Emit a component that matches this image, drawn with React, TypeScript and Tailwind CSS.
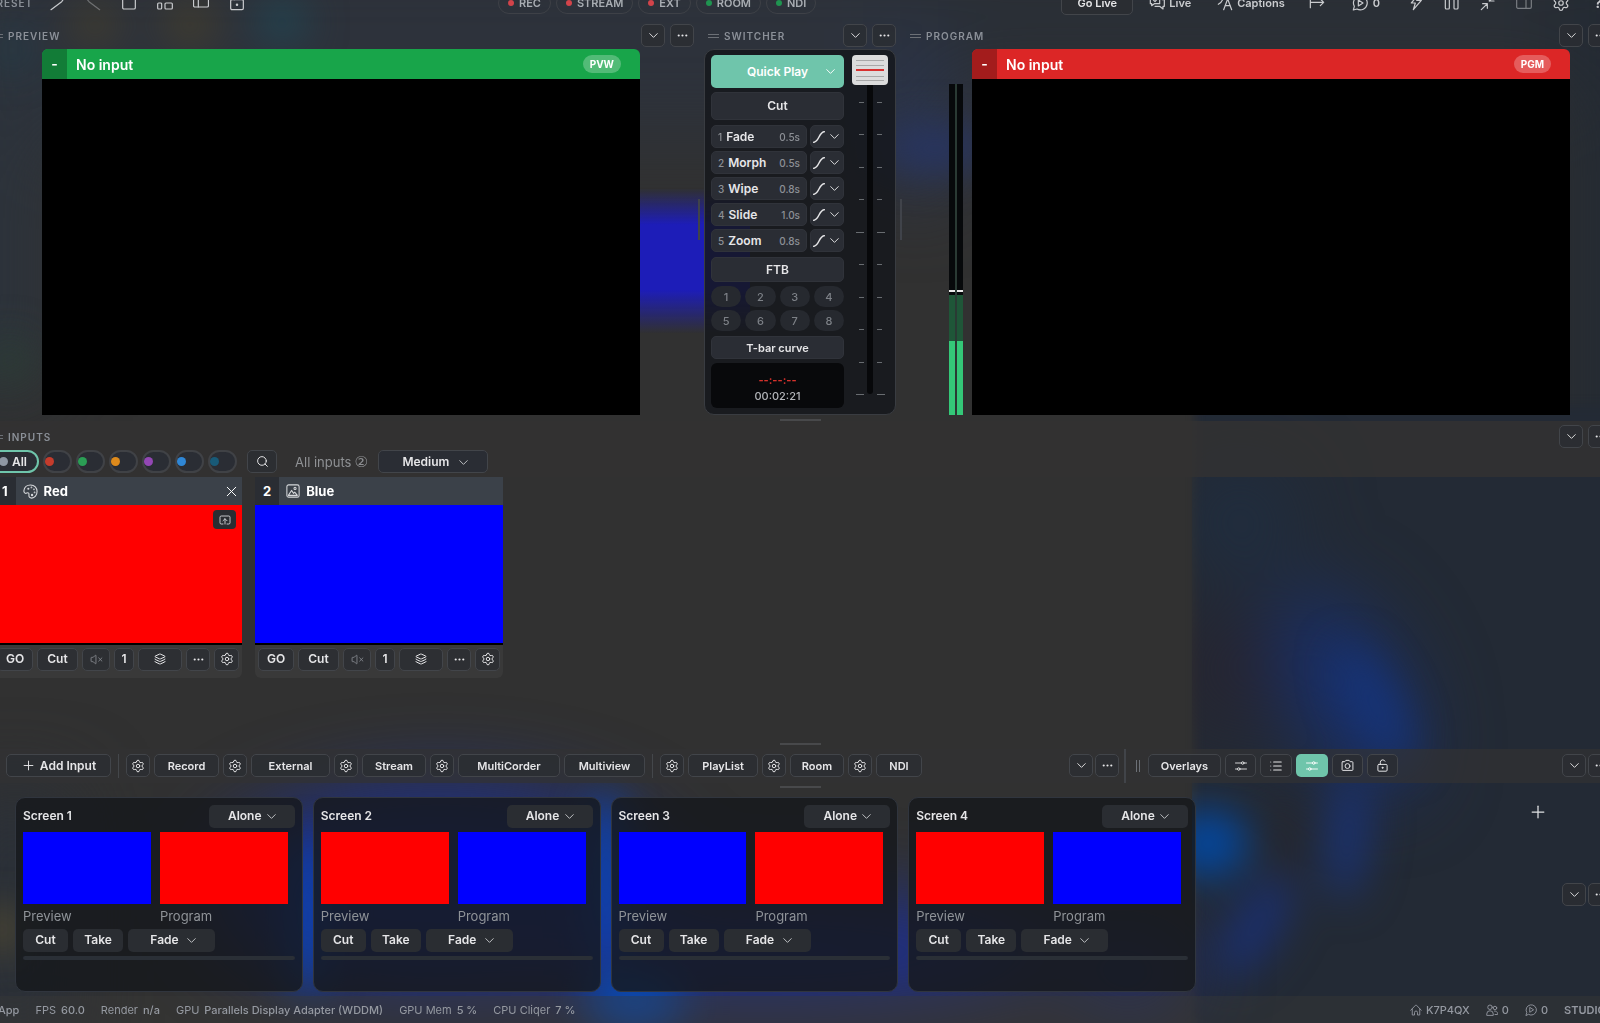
import React from 'react';
import {
  ChevronDown, Ellipsis, Settings, Search, X, Plus, Layers, VolumeX, List,
} from 'lucide-react';

type IconProps = { className?: string };

const Svg = ({ className = 'size-4', children }: IconProps & { children: React.ReactNode }) => (
  <svg
    viewBox="0 0 24 24"
    fill="none"
    stroke="currentColor"
    strokeWidth={1.8}
    strokeLinecap="round"
    strokeLinejoin="round"
    className={`shrink-0 ${className}`}
    aria-hidden="true"
  >
    {children}
  </svg>
);

const SlidersIcon = ({ className }: IconProps) => (
  <Svg className={className}>
    <path d="M1 6h12M18 6h5M1 18h4M10 18h13" />
    <circle cx="15.5" cy="6" r="2.5" />
    <circle cx="7.5" cy="18" r="2.5" />
  </Svg>
);

const CameraIcon = ({ className }: IconProps) => (
  <Svg className={className}>
    <path d="M3.500 5H7l2-2.500h6L17 5h3.500A1.500 1.500 0 0 1 22 6.500v13a1.500 1.500 0 0 1-1.500 1.500h-17A1.500 1.500 0 0 1 2 19.500v-13A1.500 1.500 0 0 1 3.500 5z" />
    <circle cx="12" cy="13" r="4.500" />
  </Svg>
);

const LockOpenIcon = ({ className }: IconProps) => (
  <Svg className={className}>
    <rect x="3.500" y="10" width="17" height="12.500" rx="2" />
    <path d="M8 10V6a4.500 4.500 0 0 1 8.500-2" />
    <circle cx="12" cy="16.200" r="1" fill="currentColor" />
  </Svg>
);

const PaletteIcon = ({ className }: IconProps) => (
  <Svg className={className}>
    <path d="M1.500 10.500C2 5 6.500 1.500 12 1.500c6.500 0 10.500 4.500 10.500 10.500s-4 10.500-8.500 10.500c-3.500 0-5-2-4.500-5 .4-2.500-.5-3.500-2-3.500-1.500 0-1.500 1-3 1-2 0-3.300-2-3-4.500z" />
    <circle cx="8.500" cy="7.500" r=".8" />
    <circle cx="13.500" cy="5.500" r=".5" />
    <circle cx="17.500" cy="8.500" r=".5" />
    <circle cx="18.500" cy="13.500" r=".5" />
    <circle cx="14.500" cy="17.500" r="1" />
  </Svg>
);

const PictureIcon = ({ className }: IconProps) => (
  <Svg className={className}>
    <rect x="1.500" y="1.500" width="21" height="21" rx="3" />
    <path d="m4 19.500 5.500-8.500 3.500 5 2-2 4.500 5.500z" />
    <circle cx="15.500" cy="7.500" r="1.800" />
  </Svg>
);

const ExportIcon = ({ className }: IconProps) => (
  <Svg className={className}>
    <path d="M8 20H4.500A2.500 2.500 0 0 1 2 17.500v-11A2.500 2.500 0 0 1 4.500 4h15A2.500 2.500 0 0 1 22 6.500v11a2.500 2.500 0 0 1-2.500 2.500H16" />
    <path d="M12 20V9.500M8 13.500l4-4 4 4" />
  </Svg>
);

const HouseIcon = ({ className }: IconProps) => (
  <Svg className={className}>
    <path d="M1.500 12.500 11 2.500a1.500 1.500 0 0 1 2 0l9.500 10M4.500 10v12H9v-5a3 3 0 0 1 6 0v5h4.500V10" />
  </Svg>
);

const UsersIcon = ({ className }: IconProps) => (
  <Svg className={className}>
    <circle cx="8" cy="6.500" r="4.500" />
    <circle cx="18" cy="8" r="3.500" />
    <path d="M1.500 22v-2a6.500 6.500 0 0 1 13 0v2zM18 21h5v-2a5 5 0 0 0-6-4.900" />
  </Svg>
);

const ChatPlayIcon = ({ className }: IconProps) => (
  <Svg className={className}>
    <path d="M2 22.500 3.500 17A10.300 10.300 0 1 1 7.500 21z" />
    <path d="M9.500 7.500v9l7-4.500z" />
  </Svg>
);

const CurveIcon = () => (
  <svg viewBox="0 0 12 12" className="size-3" fill="none" stroke="currentColor" strokeWidth="1.5" strokeLinecap="round" aria-hidden="true">
    <path d="M.7 11.300c5.300-.3 5.300-10.300 10.600-10.600" />
  </svg>
);

/* Blurred wallpaper that shows through the translucent panels */
const Wallpaper = () => (
  <svg className="absolute inset-0 w-full h-full" viewBox="0 0 1600 1023" preserveAspectRatio="none" colorInterpolationFilters="sRGB" aria-hidden="true">
    <defs>
      <filter id="soft" x="-100%" y="-100%" width="300%" height="300%"><feGaussianBlur stdDeviation="20" /></filter>
      <filter id="edge" x="-50%" y="-50%" width="200%" height="200%"><feGaussianBlur stdDeviation="5" /></filter>
      <filter id="wide" x="-100%" y="-100%" width="300%" height="300%"><feGaussianBlur stdDeviation="40" /></filter>
      <linearGradient id="beam" x1="0" y1="0" x2="0" y2="1">
        <stop offset="0" stopColor="#1d1db8" stopOpacity="0" />
        <stop offset=".25" stopColor="#1d1db8" />
        <stop offset=".7" stopColor="#1d1db8" />
        <stop offset="1" stopColor="#1d1db8" stopOpacity="0" />
      </linearGradient>
      <clipPath id="right"><rect x="1192" y="400" width="420" height="640" /></clipPath>
    </defs>
    <rect width="1600" height="1023" fill="#313131" />
    <g filter="url(#wide)">
      <rect x="-60" y="-60" width="1000" height="200" fill="#2d323b" />
      <rect x="900" y="-60" width="760" height="150" fill="#2a2f36" />
      <rect x="-60" y="60" width="110" height="330" fill="#2c333c" />
      <rect x="880" y="40" width="70" height="150" fill="#2a3550" />
      <rect x="1560" y="-60" width="120" height="560" fill="#232a33" />
    </g>
    <rect x="1196" y="405" width="460" height="660" fill="#232a35" filter="url(#edge)" />
    <g filter="url(#wide)">
      <rect x="-40" y="790" width="110" height="260" fill="#2a3039" />
      <ellipse cx="440" cy="890" rx="230" ry="105" fill="#1c2f8c" />
      <ellipse cx="760" cy="950" rx="300" ry="55" fill="#1e2f8c" />
      <ellipse cx="1130" cy="970" rx="60" ry="40" fill="#1f2c74" />
    </g>
    <g clipPath="url(#right)">
      <g filter="url(#wide)">
        <ellipse cx="1240" cy="520" rx="50" ry="50" fill="#1f2e42" />
        <ellipse cx="1230" cy="670" rx="50" ry="60" fill="#27242f" />
        <ellipse cx="1345" cy="690" rx="55" ry="110" fill="#182f6a" transform="rotate(-28 1345 690)" />
      </g>
      <g filter="url(#soft)">
        <ellipse cx="1375" cy="705" rx="22" ry="66" fill="#163479" transform="rotate(-28 1375 705)" />
        <ellipse cx="1282" cy="840" rx="14" ry="50" fill="#26262e" />
        <ellipse cx="1208" cy="842" rx="40" ry="34" fill="#04479e" />
        <ellipse cx="1348" cy="835" rx="20" ry="64" fill="#1a3272" transform="rotate(5 1348 835)" />
        <ellipse cx="1255" cy="925" rx="24" ry="60" fill="#1b2f6c" transform="rotate(32 1255 925)" />
      </g>
    </g>
    <g filter="url(#soft)">
      <ellipse cx="95" cy="25" rx="25" ry="22" fill="#4a4228" opacity=".7" />
      <ellipse cx="190" cy="25" rx="28" ry="24" fill="#4a4228" opacity=".7" />
      <ellipse cx="282" cy="22" rx="24" ry="24" fill="#1e4a58" opacity=".8" />
      <ellipse cx="12" cy="50" rx="18" ry="18" fill="#1e4a58" opacity=".6" />
      <ellipse cx="10" cy="360" rx="18" ry="24" fill="#2b4a33" opacity=".6" />
      <ellipse cx="935" cy="148" rx="55" ry="22" fill="#273565" />
      <ellipse cx="2" cy="928" rx="14" ry="20" fill="#7a652a" opacity=".8" />
      <ellipse cx="308" cy="915" rx="18" ry="80" fill="#0b46b4" />
      <ellipse cx="606" cy="880" rx="18" ry="90" fill="#0a48b8" />
      <ellipse cx="635" cy="1000" rx="50" ry="30" fill="#084ab4" />
    </g>
    <rect x="640" y="188" width="110" height="145" fill="url(#beam)" />
  </svg>
);

const outlined = 'border border-[#42454a] bg-[#2a2d32]/80 rounded-[5px] text-[#e6e6e8] font-semibold leading-4';

const IconButton = ({ label, className = 'w-6', children }: { label: string; className?: string; children: React.ReactNode }) => (
  <button aria-label={label} className={`h-[23px] shrink-0 flex items-center justify-center ${outlined} ${className}`}>
    {children}
  </button>
);

const TextButton = ({ className = 'text-[12px]', children }: { className?: string; children: React.ReactNode }) => (
  <button className={`h-[23px] shrink-0 flex items-center justify-center gap-1 whitespace-nowrap ${outlined} ${className}`}>
    {children}
  </button>
);

const PanelMenu = ({ className = 'gap-[5px]' }: IconProps) => (
  <div className={`flex shrink-0 ${className}`}>
    <IconButton label="Collapse"><ChevronDown size={15} strokeWidth={1.5} /></IconButton>
    <IconButton label="More"><Ellipsis size={13} /></IconButton>
  </div>
);

const PanelHeader = ({ title }: { title: string }) => (
  <header className="h-[23px] mb-[2px] flex items-center justify-between">
    <h2 className="flex items-center gap-[5px] text-[10px] leading-4 font-semibold tracking-widest text-[#8b9098]">
      <span className="w-[11px] h-1 border-y border-[#6c7076]" />
      {title}
    </h2>
    <PanelMenu />
  </header>
);

const Dropdown = ({ label, value, options, className }: { label: string; value: string; options: string[]; className: string }) => (
  <label className={`relative h-[23px] shrink-0 block ${className}`}>
    <span className="sr-only">{label}</span>
    <select
      defaultValue={value}
      className="appearance-none block w-full h-full rounded-[5px] pr-[14px] text-center [text-align-last:center] text-[12px] leading-5 font-semibold text-[#e6e6e8]"
    >
      {options.map((o) => <option key={o}>{o}</option>)}
    </select>
    <ChevronDown size={15} strokeWidth={1.5} className="absolute right-[16px] top-1 text-[#c5c7ca] pointer-events-none" />
  </label>
);

const Monitor = ({ tag, barColor, numColor }: { tag: string; barColor: string; numColor: string }) => (
  <div className="flex-1 min-w-0">
    <div className={`h-[30px] flex items-center rounded-t-md overflow-hidden text-white font-semibold text-[14px] leading-5 ${barColor}`}>
      <span className={`w-[25px] h-full flex items-center justify-center ${numColor}`}>-</span>
      <span className="ml-[9px] pt-[2px] flex-1">No input</span>
      <span className="mr-[19px] h-[18px] px-[7px] rounded-full bg-white/25 text-[10px] leading-[18px] font-bold">{tag}</span>
    </div>
    <div className="aspect-video bg-black" />
  </div>
);

const statusPills = [
  { name: 'REC', dot: 'bg-[#d2434a]' },
  { name: 'STREAM', dot: 'bg-[#d2434a]' },
  { name: 'EXT', dot: 'bg-[#d2434a]' },
  { name: 'ROOM', dot: 'bg-[#1f9350]' },
  { name: 'NDI', dot: 'bg-[#1f9350]' },
];

const TopBar = () => (
  <div className="-mt-[9px] h-6 flex items-center text-[#c9cbce]">
    <div className="w-[514px] shrink-0 pl-[5px] flex items-center gap-5">
      <span className="-mr-1 text-[10px] leading-4 font-semibold tracking-widest text-[#8b9098]">PRESET</span>
      <button aria-label="Edit"><Svg><path d="M3 22 19 10q3-3 2-6" /></Svg></button>
      <button aria-label="Redo" className="opacity-40"><Svg><path d="M22 22 6 10Q3 7 3 4" /></Svg></button>
      <button aria-label="New"><Svg><rect x="2.500" y="-6" width="19" height="27" rx="2" /></Svg></button>
      <button aria-label="Layout">
        <Svg>
          <rect x="1" y="1" width="10" height="5" rx="1" /><rect x="15" y="1" width="7" height="5" rx="1" />
          <rect x="1" y="12" width="6" height="9" rx="1.500" /><rect x="12" y="12" width="11" height="9" rx="1.500" />
        </Svg>
      </button>
      <button aria-label="Panels"><Svg><rect x="0.800" y="-6" width="22.400" height="24" rx="2" /><path d="M8 0v18M8 2h15" /></Svg></button>
      <button aria-label="Lock">
        <Svg><rect x="2.500" y="7" width="19" height="15" rx="2" /><path d="M8 7V3a4 4 0 0 1 8 0" /><circle cx="12" cy="14.500" r="1" fill="currentColor" /></Svg>
      </button>
    </div>
    <div className="flex gap-[5px]">
      {statusPills.map((p) => (
        <span key={p.name} className="h-[22px] px-[9px] flex items-center gap-[5px] rounded-full border border-[#3e4147] text-[11px] leading-4 font-semibold text-[#a9adb3]">
          <span className={`size-[6px] rounded-full ${p.dot}`} />
          {p.name}
        </span>
      ))}
    </div>
    <div className="ml-auto flex items-center gap-5 text-[11px] leading-4 font-semibold">
      <TextButton className="-mr-1 w-[72px] text-[11px]">Go Live</TextButton>
      <button className="flex items-center gap-1">
        <Svg><path d="M2 2h14v11H8l-4 3v-3H2zM20 7h3v10h-2v4l-5-4H9" /><path d="m6 7 3 3 5-6" /></Svg>
        Live
      </button>
      <button className="ml-[6px] flex items-center gap-1">
        <Svg><path d="M1 5h10M6 2v3M2 14c4-2 6-5 7-9M10 22l6-16 6 16M12 16h8" /></Svg>
        Captions
      </button>
      <button aria-label="Output" className="ml-1"><Svg><path d="M2 3v16M2 11h20M17 6l5 5-5 5" /></Svg></button>
      <button className="ml-[7px] flex items-center gap-[5px]"><ChatPlayIcon />0</button>
      <button aria-label="Macros" className="ml-2"><Svg><path d="M14 1 5 12h6l-3 10L20 8h-7l4-7z" /></Svg></button>
      <button aria-label="Pause"><Svg><rect x="2" y="1" width="6" height="20" rx="1.500" /><rect x="15" y="1" width="6" height="20" rx="1.500" /></Svg></button>
      <button aria-label="Shrink"><Svg><path d="M2 22 10 14M4 13h7v7M22 2l-8 7M14 3v6h7" /></Svg></button>
      <button aria-label="Sidebar" className="opacity-50"><Svg><rect x="1" y="1" width="22" height="19" rx="2" /><path d="M15 1v19" /></Svg></button>
      <button aria-label="Settings"><Settings size={18} strokeWidth={1.6} /></button>
      <button aria-label="Help" className="ml-1 w-[18px] text-left text-[15px]">?</button>
    </div>
  </div>
);

const transitions = [
  { name: 'Fade', time: '0.5s' },
  { name: 'Morph', time: '0.5s' },
  { name: 'Wipe', time: '0.8s' },
  { name: 'Slide', time: '1.0s' },
  { name: 'Zoom', time: '0.8s' },
];

const flat = 'bg-[#2a2d34] border border-[#30333a] rounded-[5px] text-[#e6e6e8] font-semibold';

const Tick = ({ wide }: { wide: boolean }) => (
  <span className="flex justify-center gap-[13px]">
    <span className={`h-px bg-[#686c70] ${wide ? 'w-2' : 'w-[5px]'}`} />
    <span className={`h-px bg-[#686c70] ${wide ? 'w-2' : 'w-[5px]'}`} />
  </span>
);

const Switcher = () => (
  <section className="flex flex-col">
    <div className="pl-1"><PanelHeader title="SWITCHER" /></div>
    <div className="flex-1 flex gap-2 py-[5px] pl-[6px] pr-[7px] rounded-[10px] border border-[#393c41] bg-[#15181c]/85">
      <div className="flex-1 flex flex-col gap-1 text-[12px] leading-4">
        <button className="h-[33px] flex items-center justify-center relative rounded-[5px] bg-[#6fc5ab] text-white font-semibold">
          Quick Play
          <ChevronDown size={15} strokeWidth={1.5} className="absolute right-[6px]" />
        </button>
        <button className={`h-7 ${flat}`}>Cut</button>
        <div className="pt-px flex flex-col gap-[3px]">
          {transitions.map((t, i) => (
            <div key={t.name} className="flex gap-[3px]">
              <button className={`h-[23px] flex-1 flex items-center gap-1 px-[6px] ${flat}`}>
                <span className="text-[10px] font-medium text-[#8d9096]">{i + 1}</span>
                {t.name}
                <span className="ml-auto text-[10px] font-medium text-[#8d9096]">{t.time}</span>
              </button>
              <button aria-label={`${t.name} curve`} className={`w-[34px] flex items-center justify-center gap-[2px] ${flat}`}>
                <CurveIcon />
                <ChevronDown size={15} strokeWidth={1.5} />
              </button>
            </div>
          ))}
        </div>
        <button className={`mt-px h-[25px] ${flat}`}>FTB</button>
        <div className="grid grid-cols-4 gap-x-1 gap-y-[3px]">
          {[1, 2, 3, 4, 5, 6, 7, 8].map((n) => (
            <button key={n} className="h-[21px] rounded-full bg-[#26292f] text-[11px] font-medium text-[#7d8187]">{n}</button>
          ))}
        </div>
        <button className={`mt-px h-[23px] text-[11px] ${flat}`}>T-bar curve</button>
        <div className="h-[45px] pt-1 rounded-md bg-[#08090b] flex flex-col items-center justify-center text-[11px]">
          <span className="font-bold text-[#d5322c]">--:--:--</span>
          <span className="text-[#b4b6ba] font-medium">00:02:21</span>
        </div>
      </div>
      <div className="relative w-9 flex justify-center">
        <div className="mt-6 mb-[15px] w-[6px] rounded-full bg-[#07080a]" />
        <div className="absolute inset-x-0 top-[47px] bottom-[14px] flex flex-col justify-between">
          {[0, 1, 2, 3, 4, 5, 6, 7, 8, 9].map((n) => <Tick key={n} wide={n === 4 || n === 9} />)}
        </div>
        <input
          type="range"
          aria-label="T-bar"
          defaultValue={0}
          className="absolute top-0 left-0 w-9 h-[338px] appearance-none bg-transparent [writing-mode:vertical-lr] [&::-webkit-slider-thumb]:appearance-none [&::-webkit-slider-thumb]:w-9 [&::-webkit-slider-thumb]:h-[30px] [&::-webkit-slider-thumb]:rounded [&::-webkit-slider-thumb]:bg-[#dcdcdc] [&::-webkit-slider-thumb]:bg-[linear-gradient(#dcdcdc_5px,#a8a8a8_5px_6px,#dcdcdc_6px_10px,#a8a8a8_10px_11px,#dcdcdc_11px_14px,#d8302f_14px_16px,#dcdcdc_16px_21px,#a8a8a8_21px_22px,#dcdcdc_22px_25px,#a8a8a8_25px_26px,#dcdcdc_26px)] [&::-webkit-slider-thumb]:bg-size-[28px_100%] [&::-webkit-slider-thumb]:bg-center [&::-webkit-slider-thumb]:bg-no-repeat"
        />
      </div>
    </div>
  </section>
);

const MeterBar = () => (
  <div className="flex-1 flex flex-col bg-[#07090b]">
    <div className="flex-1" />
    <div className="h-[2px] bg-[#e8e8e8]" />
    <div className="h-[3px]" />
    <div className="h-[46px] bg-[#1f5638]" />
    <div className="h-[74px] bg-[#34c878]" />
  </div>
);

const HSplitter = () => (
  <div className="pl-[5px] flex justify-center">
    <span className="w-[41px] h-[2px] bg-[#48494b]" />
  </div>
);

const VSplitter = () => <div className="place-self-center w-[2px] h-[41px] bg-[#40434a]" />;

const Monitors = () => (
  <div className="mt-[9px] grid grid-cols-[710fr_10px_192px_10px_706fr]">
    <section>
      <div className="pl-2"><PanelHeader title="PREVIEW" /></div>
      <div className="pl-[58px] pr-[54px] flex">
        <Monitor tag="PVW" barColor="bg-[#18a54a]" numColor="bg-[#127c37]" />
      </div>
    </section>
    <VSplitter />
    <Switcher />
    <VSplitter />
    <section>
      <div className="pl-1"><PanelHeader title="PROGRAM" /></div>
      <div className="pl-[43px] pr-[42px] flex gap-[9px]">
        <div className="mt-[35px] w-[14px] flex gap-[2px] bg-[#2a3a34]">
          <MeterBar />
          <MeterBar />
        </div>
        <Monitor tag="PGM" barColor="bg-[#dc2626]" numColor="bg-[#a31c1c]" />
      </div>
    </section>
  </div>
);

const colorDots = ['bg-[#c43c2c]', 'bg-[#2b9e55]', 'bg-[#dd8a1c]', 'bg-[#9347b4]', 'bg-[#2f87d6]', 'bg-[#185a78]'];

const InputCard = ({ index, name, icon, color, active }: { index: number; name: string; icon: React.ReactNode; color: string; active?: boolean }) => (
  <article className="w-[248px] shrink-0 rounded-b-md bg-[#393939]">
    <div className="h-7 flex items-center bg-[#3b4149] text-[13px] leading-4 font-bold text-white">
      <span className="px-2 h-full flex items-center justify-center bg-[#2a2d33]">{index}</span>
      <span className="ml-[7px] mr-[6px] text-[#d5d7da]">{icon}</span>
      <span className="flex-1">{name}</span>
      {active && <button aria-label="Remove" className="mr-[2px]"><X size={17} strokeWidth={1.4} /></button>}
    </div>
    <div className={`relative aspect-video border-b-2 border-black ${color}`}>
      {active && (
        <button aria-label="Send" className="absolute right-[6px] top-[5px] w-[23px] h-[19px] rounded flex items-center justify-center bg-[#2a2d32] text-[#d5d7da]">
          <ExportIcon className="size-3" />
        </button>
      )}
    </div>
    <div className="flex gap-1 px-[3px] pt-[3px] pb-[7px]">
      <TextButton className="w-9 text-[12px]">GO</TextButton>
      <TextButton className="w-[41px] text-[12px]">Cut</TextButton>
      <IconButton label="Mute" className="w-7"><VolumeX size={13} strokeWidth={1.5} className="text-[#8d9096]" /></IconButton>
      <TextButton className="w-5 text-[12px]">1</TextButton>
      <IconButton label="Layers" className="w-11"><Layers size={12} strokeWidth={2} /></IconButton>
      <IconButton label="More"><Ellipsis size={13} /></IconButton>
      <IconButton label="Input settings" className="flex-1"><Settings size={14} strokeWidth={1.7} /></IconButton>
    </div>
  </article>
);

const Inputs = () => (
  <section>
    <div className="pt-1 pb-1 bg-[#333232]/80">
      <div className="pl-2"><PanelHeader title="INPUTS" /></div>
      <div className="pl-[5px] flex items-center gap-1">
        <button className="h-[23px] pl-2 pr-[10px] flex items-center gap-1 rounded-full border-2 border-[#6fc5ab] bg-[#2a2d34] text-[12px] leading-4 font-semibold text-[#e6e6e8]">
          <span className="size-[9px] rounded-full bg-[#8e97a3]" />
          All
        </button>
        {colorDots.map((c) => (
          <button key={c} aria-label="Filter by colour" className="w-[29px] h-[23px] flex items-center rounded-full border-2 border-[#404246] bg-[#2a2d34]">
            <span className={`size-[9px] rounded-full ${c}`} />
          </button>
        ))}
        <IconButton label="Search" className="ml-[6px] w-[30px]"><Search size={13} strokeWidth={1.8} /></IconButton>
        <span className="ml-[14px] flex items-center gap-[3px] text-[13px] leading-5 text-[#8f9194]">
          All inputs
          <span className="font-['DejaVu_Sans',sans-serif] text-[15px]">②</span>
        </span>
        <Dropdown
          label="Thumbnail size"
          value="Medium"
          options={['Small', 'Medium', 'Large']}
          className="ml-[6px] w-[110px] border border-[#42454a] bg-[#2a2d34] rounded-[5px]"
        />
      </div>
    </div>
    <div className="pl-[10px] flex gap-[13px]">
      <InputCard index={1} name="Red" icon={<PaletteIcon className="size-[15px]" />} color="bg-[#ff0000]" active />
      <InputCard index={2} name="Blue" icon={<PictureIcon className="size-[14px]" />} color="bg-[#0000ff]" />
    </div>
  </section>
);

const Gear = ({ label }: { label: string }) => (
  <IconButton label={label}><Settings size={14} strokeWidth={1.7} /></IconButton>
);

const Toolbar = () => (
  <div className="h-[34px] pl-[22px] flex items-center bg-[#323233]/70">
    <TextButton className="w-[105px] text-[12px]"><Plus size={15} strokeWidth={1.5} />Add Input</TextButton>
    <span className="mx-[7px] w-px h-6 bg-[#44474b]" />
    <div className="flex gap-1">
      <Gear label="Record settings" /><TextButton className="w-[65px] text-[11px]">Record</TextButton>
      <Gear label="External settings" /><TextButton className="w-[79px] text-[11px]">External</TextButton>
      <Gear label="Stream settings" /><TextButton className="w-16 text-[11px]">Stream</TextButton>
      <Gear label="MultiCorder settings" /><TextButton className="w-[102px] text-[11px]">MultiCorder</TextButton>
      <TextButton className="w-[81px] text-[11px]">Multiview</TextButton>
    </div>
    <span className="mx-[7px] w-px h-6 bg-[#44474b]" />
    <div className="flex gap-1">
      <Gear label="PlayList settings" /><TextButton className="w-[70px] text-[11px]">PlayList</TextButton>
      <Gear label="Room settings" /><TextButton className="w-[54px] text-[11px]">Room</TextButton>
      <Gear label="NDI settings" /><TextButton className="w-[46px] text-[11px]">NDI</TextButton>
    </div>
    <PanelMenu className="ml-auto gap-[2px]" />
    <div className="self-stretch ml-[5px] w-[488px] border-l-2 border-[#414449] pl-[10px] flex items-center">
      <span className="mr-2 w-1 h-3 border-x border-[#6c7076]" />
      <div className="flex gap-1">
        <TextButton className="w-[73px] text-[11px]">Overlays</TextButton>
        <IconButton label="Mixer" className="w-[31px]"><SlidersIcon className="size-3" /></IconButton>
        <IconButton label="List" className="w-8"><List size={14} strokeWidth={1.8} /></IconButton>
        <button aria-label="Overlay mixer" className="w-8 h-[23px] flex items-center justify-center rounded-[5px] bg-[#6fc5ab] text-white">
          <SlidersIcon className="size-3" />
        </button>
        <IconButton label="Snapshot" className="w-[31px]"><CameraIcon className="size-[13px]" /></IconButton>
        <IconButton label="Unlock" className="w-[31px]"><LockOpenIcon className="size-[13px]" /></IconButton>
      </div>
      <PanelMenu className="ml-auto gap-[2px]" />
    </div>
  </div>
);

const screens = [
  { id: 1, preview: 'bg-[#0000ff]', program: 'bg-[#ff0000]' },
  { id: 2, preview: 'bg-[#ff0000]', program: 'bg-[#0000ff]' },
  { id: 3, preview: 'bg-[#0000ff]', program: 'bg-[#ff0000]' },
  { id: 4, preview: 'bg-[#ff0000]', program: 'bg-[#0000ff]' },
];

const ScreenCard = ({ id, preview, program }: { id: number; preview: string; program: string }) => (
  <article className="flex-1 pt-[7px] px-[7px] pb-[31px] rounded-[10px] border border-[#30353e] bg-[#15181c]/80">
    <div className="flex items-center justify-between">
      <h3 className="text-[12px] leading-4 font-semibold text-[#e6e6e8]">Screen {id}</h3>
      <Dropdown label="Mode" value="Alone" options={['Alone', 'Follow']} className="w-[86px] rounded-[5px] bg-[#2a2d32]" />
    </div>
    <div className="mt-1 mr-[7px] grid grid-cols-2 gap-[9px] text-[13px] leading-6 text-[#8f9398]">
      <figure>
        <div className={`aspect-video ${preview}`} />
        <figcaption>Preview</figcaption>
      </figure>
      <figure>
        <div className={`aspect-video ${program}`} />
        <figcaption>Program</figcaption>
      </figure>
    </div>
    <div className="mt-px flex gap-[5px] text-[12px] leading-4 font-semibold text-[#e6e6e8]">
      <button className="w-[45px] h-[23px] rounded-[5px] bg-[#2a2d32]">Cut</button>
      <button className="w-[50px] h-[23px] rounded-[5px] bg-[#2a2d32]">Take</button>
      <Dropdown label="Transition" value="Fade" options={['Fade', 'Wipe', 'Slide']} className="w-[87px] rounded-[5px] bg-[#2a2d32]" />
    </div>
    <div className="mt-1 h-1 rounded-full bg-[#2a2f36]" />
  </article>
);

const Screens = () => (
  <div className="pl-[31px] flex justify-between">
    <div className="w-[1181px] flex gap-[10px]">
      {screens.map((s) => <ScreenCard key={s.id} {...s} />)}
    </div>
    <div className="flex flex-col items-end text-[#e0e2e4]">
      <button aria-label="Add" className="mt-[5px] mr-[64px]"><Plus size={20} strokeWidth={1.5} /></button>
      <PanelMenu className="mt-[61px] gap-[2px]" />
    </div>
  </div>
);

const stats = [
  { name: 'FPS', value: '60.0' },
  { name: 'Render', value: 'n/a' },
  { name: 'GPU', value: 'Parallels Display Adapter (WDDM)' },
  { name: 'GPU Mem', value: '5 %' },
  { name: 'CPU Cliqer', value: '7 %' },
];

const StatusBar = () => (
  <footer className="mt-1 h-[29px] pl-[14px] pr-[6px] flex items-center justify-between bg-[#3a3936]/40 text-[11px] leading-4 text-[#9599a1] whitespace-nowrap">
    <div className="flex gap-4">
      <span className="font-medium">App</span>
      {stats.map((s) => (
        <span key={s.name} className="flex gap-[5px]">
          {s.name}
          <b className="font-medium">{s.value}</b>
        </span>
      ))}
    </div>
    <div className="flex gap-4 font-medium">
      <span className="flex items-center gap-1"><HouseIcon className="size-3" />K7P4QX</span>
      <span className="flex items-center gap-1"><UsersIcon className="size-3" />0</span>
      <span className="flex items-center gap-1"><ChatPlayIcon className="size-3" />0</span>
      <span className="font-semibold">STUDIO</span>
    </div>
  </footer>
);

export default function App() {
  return (
    <div className="relative min-h-screen overflow-hidden bg-[#313131] font-['Inter','Liberation_Sans',sans-serif]">
      <Wallpaper />
      <div className="relative -ml-4 -mr-3">
        <TopBar />
        <Monitors />
        <div className="mt-1"><HSplitter /></div>
        <Inputs />
        <div className="mt-[65px]"><HSplitter /></div>
        <div className="mt-1"><Toolbar /></div>
        <div className="mt-[3px] mb-[9px]"><HSplitter /></div>
        <Screens />
        <StatusBar />
      </div>
    </div>
  );
}
